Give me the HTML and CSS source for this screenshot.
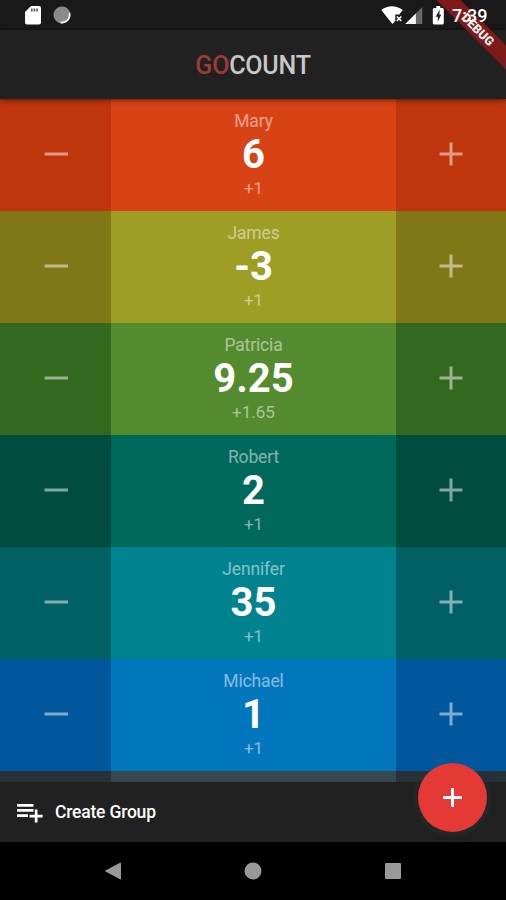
FILE: index.html
```html
<!DOCTYPE html>
<html lang="en">
<head>
  <meta charset="UTF-8">
  <meta name="viewport" content="width=device-width, initial-scale=1.0">
  <title>GoCount</title>
  <link rel="stylesheet" href="styles.css">
</head>
<body>

<svg width="0" height="0" class="symbols">
  <symbol id="minus" viewBox="0 0 24 24"><path d="M.5 10.500h23.500v3H.5z"/></symbol>
  <symbol id="plus" viewBox="0 0 24 24"><path d="M.5 10.500h10v-10h3v10h10v3h-10v10h-3v-10h-10z"/></symbol>
</svg>

<div class="phone">
  <div class="debug-banner">DEBUG</div>

  <div class="status-bar">
    <svg class="status-left" width="60" height="30" viewBox="0 0 60 30">
      <path fill="#fff" d="M11 6h8q2 0 2 2v14.500q0 2-2 2H7q-2 0-2-2V12z"/>
      <path fill="#555" d="M11 8.500h1.600v3H11zM13.600 8.500h1.600v3h-1.600zM16.200 8.500h1.600v3h-1.600z"/>
      <circle cx="42" cy="15" r="8.500" fill="#8a8a8a"/>
      <path d="M49.300 13a7.500 7.500 0 0 1-8.800 9.300" fill="none" stroke="#eee" stroke-width="1.800"/>
    </svg>
    <svg class="status-right" width="70" height="30" viewBox="0.700 0 70 30">
      <path fill="#fff" d="M1 10Q11.500 2.500 22.500 10L19 14.500h-4v6.500l-3 3z"/>
      <path stroke="#fff" stroke-width="1.600" d="M16.500 16.500l4.500 4.500M21 16.500l-4.500 4.500"/>
      <path fill="#666" d="M42 7V24H25z"/>
      <path fill="#fff" d="M35.500 13.500V24H25z"/>
      <path fill="#fff" d="M56 6h4v2h2q1.500 0 1.500 1.500v13.500q0 1.500-1.500 1.500h-8q-1.500 0-1.500-1.500v-13.500Q52.500 8 54 8h2z"/>
      <path fill="#222" d="M59.500 9.500l-4.200 7.200h2.200v4.800l3.500-7h-2z"/>
    </svg>
    <span class="time">7:39</span>
  </div>

  <div class="app-bar"><span class="go">GO</span>COUNT</div>

  <div class="counters">
    <div class="counter orange">
      <button class="side"><svg><use href="#minus"/></svg></button>
      <div class="middle"><span class="name">Mary</span><span class="value">6</span><span class="step">+1</span></div>
      <button class="side"><svg><use href="#plus"/></svg></button>
    </div>
    <div class="counter lime">
      <button class="side"><svg><use href="#minus"/></svg></button>
      <div class="middle"><span class="name">James</span><span class="value">-3</span><span class="step">+1</span></div>
      <button class="side"><svg><use href="#plus"/></svg></button>
    </div>
    <div class="counter green">
      <button class="side"><svg><use href="#minus"/></svg></button>
      <div class="middle"><span class="name">Patricia</span><span class="value">9.25</span><span class="step">+1.65</span></div>
      <button class="side"><svg><use href="#plus"/></svg></button>
    </div>
    <div class="counter teal">
      <button class="side"><svg><use href="#minus"/></svg></button>
      <div class="middle"><span class="name">Robert</span><span class="value">2</span><span class="step">+1</span></div>
      <button class="side"><svg><use href="#plus"/></svg></button>
    </div>
    <div class="counter cyan">
      <button class="side"><svg><use href="#minus"/></svg></button>
      <div class="middle"><span class="name">Jennifer</span><span class="value">35</span><span class="step">+1</span></div>
      <button class="side"><svg><use href="#plus"/></svg></button>
    </div>
    <div class="counter blue">
      <button class="side"><svg><use href="#minus"/></svg></button>
      <div class="middle"><span class="name">Michael</span><span class="value">1</span><span class="step">+1</span></div>
      <button class="side"><svg><use href="#plus"/></svg></button>
    </div>
    <div class="counter grey">
      <div class="side"></div>
      <div class="middle"></div>
      <div class="side"></div>
    </div>
  </div>

  <div class="bottom-bar">
    <svg width="26" height="20" viewBox="0 0 26 20">
      <path fill="#fff" d="M0 1h16.500v2.700H0zM0 6.100h16.500v2.700H0zM0 11.200h11v2.700H0zM17.800 6.500h2.700v5.200h5.200v2.700h-5.200v5.200h-2.700v-5.200h-5.200v-2.700h5.200z"/>
    </svg>
    <span>Create Group</span>
    <button class="fab"></button>
  </div>

  <div class="nav-bar">
    <svg width="18" height="20" viewBox="0 0 18 20"><path fill="#999" d="M16 1.800q1-.5 1 .5v15.400q0 1-1 .5L1.500 10.500q-.8-.5 0-1z"/></svg>
    <svg width="18" height="20" viewBox="0 0 18 20"><circle cx="9" cy="10" r="8.500" fill="#999"/></svg>
    <svg width="18" height="20" viewBox="0 0 18 20"><rect x="1" y="2" width="16" height="16" rx="1" fill="#999"/></svg>
  </div>
</div>

</body>
</html>
```

FILE: styles.css
```css
body {
  font-family: Roboto, sans-serif;
  margin: 0;
  background-color: #000;
}

button {
  border: none;
  padding: 0;
}

.symbols {
  display: none;
}

.phone {
  position: relative;
  width: 506px;
  height: 900px;
  overflow: hidden;
  display: flex;
  flex-direction: column;
}

.debug-banner {
  position: absolute;
  left: 417px;
  top: 20.500px;
  width: 122px;
  height: 17px;
  line-height: 17px;
  transform: rotate(45deg);
  background-color: #801a1a;
  color: #eee;
  font-size: 12.500px;
  font-weight: 900;
  text-align: center;
  z-index: 1;
}

.status-bar {
  height: 30px;
  flex: none;
  background-color: #191919;
  display: flex;
  color: #fff;
}

.status-left {
  margin-left: 20px;
}

.status-right {
  margin-left: auto;
}

.time {
  position: relative;
  z-index: 2;
  width: 53px;
  margin-right: 1px;
  padding-left: 1px;
  font-size: 18px;
  font-weight: 500;
  line-height: 32px;
}

.app-bar {
  height: 69px;
  flex: none;
  background-color: #212121;
  color: #c8c8c8;
  font-size: 25px;
  font-weight: 500;
  letter-spacing: -0.200px;
  line-height: 71px;
  text-align: center;
  position: relative;
  box-shadow: 0 1px 5px rgba(0, 0, 0, 0.6);
}

.go {
  color: #9c3a36;
}

.counters {
  height: 683px;
  flex: none;
  overflow: hidden;
}

.counter {
  height: 112px;
  display: grid;
  grid-template-columns: 111px 285px 110px;
}

.side {
  display: flex;
  align-items: center;
  justify-content: center;
}

.side svg {
  width: 24px;
  height: 24px;
  fill: #fff;
  opacity: 0.5;
  margin-bottom: 2px;
}

.middle {
  display: flex;
  flex-direction: column;
  align-items: center;
  color: #fff;
}

.name {
  margin-top: 11px;
  font-size: 17.500px;
  letter-spacing: -0.150px;
  line-height: 22px;
  opacity: 0.5;
}

.value {
  margin-top: 1px;
  font-size: 40px;
  font-weight: 700;
  line-height: 44px;
}

.step {
  font-size: 17px;
  line-height: 22px;
  opacity: 0.5;
}

.orange { background-color: #d84315; }
.orange .side { background-color: #bf360c; }
.lime { background-color: #9e9d24; }
.lime .side { background-color: #827717; }
.green { background-color: #558b2f; }
.green .side { background-color: #33691e; }
.teal { background-color: #00695c; }
.teal .side { background-color: #004d40; }
.cyan { background-color: #00838f; }
.cyan .side { background-color: #006064; }
.blue { background-color: #0277bd; }
.blue .side { background-color: #01579b; }
.grey { background-color: #37474f; }
.grey .side { background-color: #263238; }

/* the darker ring is the notch cut around the round button */
.bottom-bar {
  position: relative;
  height: 60px;
  flex: none;
  background: radial-gradient(circle at 452.500px 15.500px, #1f2827 38.500px, #212121 39.500px);
  display: flex;
  align-items: center;
  color: #fff;
  font-size: 17.500px;
  font-weight: 500;
  letter-spacing: -0.200px;
}

.bottom-bar svg {
  margin: 1px 12px 0 17px;
}

.fab {
  position: absolute;
  left: 418px;
  top: -19px;
  width: 69px;
  height: 69px;
  border-radius: 50%;
  background: linear-gradient(#fff, #fff) center / 19px 3px no-repeat,
    linear-gradient(#fff, #fff) center / 3px 19px no-repeat,
    #e53935;
}

.nav-bar {
  flex: 1;
  display: flex;
  justify-content: center;
  align-items: center;
  gap: 122px;
  background-color: #000;
}
```
